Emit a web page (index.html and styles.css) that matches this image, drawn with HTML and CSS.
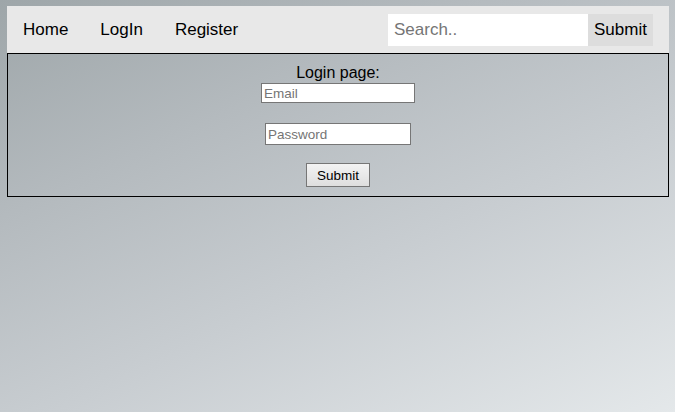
FILE: index.html
```html
<!DOCTYPE html>
<html>
<head>
<meta charset="utf-8">
<link rel="stylesheet" href="styles.css">
</head>
<body>
<div class="topnav">
  <a class="nav-link" href="#">Home</a>
  <a class="nav-link" href="#">LogIn</a>
  <a class="nav-link" href="#">Register</a>
  <form class="search">
    <input class="search-input" type="text" placeholder="Search..">
    <button class="search-btn" type="button">Submit</button>
  </form>
</div>
<div class="login-box">
  <div class="login-title">Login page:</div>
  <input class="field field-email" type="email" placeholder="Email">
  <input class="field field-pass" type="password" placeholder="Password">
  <button class="login-btn" type="button">Submit</button>
</div>
</body>
</html>
```

FILE: styles.css
```css
html {
  height: 100%;
  background: linear-gradient(155deg, #9ea6a9 0%, #b4babe 30%, #c8cdd1 60%, #e4e8ea 100%);
}
body {
  margin: 6px 6px 0 7px;
  font-family: "Liberation Sans", Arial, sans-serif;
  min-height: 400px;
}
.topnav {
  display: flex;
  align-items: flex-start;
  background: #e8e8e8;
  height: 47px;
}
.nav-link {
  color: #000;
  text-decoration: none;
  font-size: 17px;
  line-height: 19px;
  padding: 14px 16px;
}
.search {
  display: flex;
  margin: 8px 16px 0 auto;
}
.search-input {
  box-sizing: border-box;
  width: 200px;
  height: 32px;
  border: none;
  padding: 6px;
  font-family: "Liberation Sans", Arial, sans-serif;
  font-size: 17px;
  background: #fff;
  outline: none;
}
.search-input::placeholder {
  color: #757575;
}
.search-btn {
  box-sizing: border-box;
  width: 65px;
  height: 32px;
  border: none;
  padding: 0;
  background: #dddddd;
  font-family: "Liberation Sans", Arial, sans-serif;
  font-size: 17px;
  color: #000;
}
.login-box {
  border: 1px solid #000;
  height: 142px;
  box-sizing: content-box;
  display: flex;
  flex-direction: column;
  align-items: center;
  padding-top: 0;
}
.login-title {
  font-size: 16px;
  line-height: 18px;
  margin-top: 10px;
  margin-bottom: 1px;
  color: #000;
}
.field {
  box-sizing: border-box;
  border: 1px solid #767676;
  background: #fff;
  font-family: "Liberation Sans", Arial, sans-serif;
  font-size: 13.5px;
  padding: 1px 2px;
  margin: 0;
}
.field::placeholder {
  color: #757575;
}
.field-email {
  width: 154px;
  height: 20px;
  margin-bottom: 20px;
}
.field-pass {
  width: 146px;
  height: 22px;
  margin-bottom: 18px;
}
.login-btn {
  box-sizing: border-box;
  width: 64px;
  height: 24px;
  border: 1px solid #767676;
  background: linear-gradient(#f3f3f3, #dedede);
  font-family: "Liberation Sans", Arial, sans-serif;
  font-size: 13.5px;
  color: #000;
  padding: 0;
}
```
